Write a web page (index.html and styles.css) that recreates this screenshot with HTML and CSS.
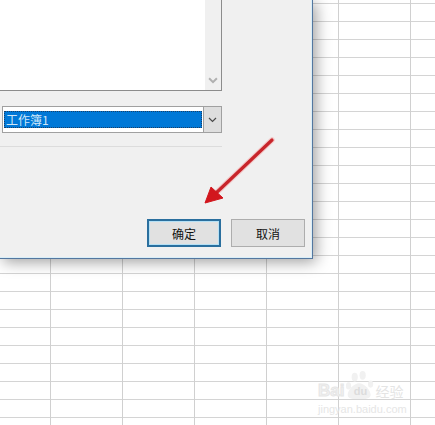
FILE: index.html
```html
<!DOCTYPE html>
<html lang="zh-CN">

<head>
    <meta charset="UTF-8">
    <title>选择工作簿</title>
    <link rel="stylesheet" href="styles.css">
</head>

<body>
    <!-- the sheet cells are the body background -->
    <div class="dialog">
        <div class="list">
            <div class="list-body"></div>
            <div class="scrollbar">
                <svg class="chevron chevron-list" viewBox="0 0 9 6"><path d="M1 1l3.5 3.5L8 1"/></svg>
            </div>
        </div>

        <div class="select">
            <div class="select-field"><span class="select-value">工作簿1</span></div>
            <div class="select-btn">
                <svg class="chevron" viewBox="0 0 9 6"><path d="M1 1l3.5 3.5L8 1"/></svg>
            </div>
        </div>

        <div class="separator"></div>

        <div class="buttons">
            <button class="btn btn-default" type="button">确定</button>
            <button class="btn" type="button">取消</button>
        </div>
    </div>

    <!-- red arrow pointing at the OK button -->
    <svg class="arrow" viewBox="0 0 80 74">
        <path class="arrow-halo" d="M72 4L15 58"/>
        <path class="arrow-line" d="M72 4L15 58"/>
        <path class="arrow-head" d="M5 67L11 51L23 62Z"/>
    </svg>

    <div class="watermark">
        <div class="wm-top">
            <span class="wm-bai">Bai</span>
            <svg class="wm-paw" viewBox="0 0 34 34">
                <ellipse cx="11" cy="8" rx="3.5" ry="5"/>
                <ellipse cx="20" cy="6" rx="3.5" ry="5"/>
                <ellipse cx="4" cy="18" rx="3" ry="4"/>
                <ellipse cx="29" cy="16" rx="3" ry="4"/>
                <path d="M16 15c6 0 13 8 13 13s-6 5-13 5-13 0-13-5 7-13 13-13z"/>
            </svg>
            <span class="wm-du">du</span>
            <span class="wm-cn">经验</span>
        </div>
        <div class="wm-url">jingyan.baidu.com</div>
    </div>
</body>

</html>
```

FILE: styles.css
```css
html,
body {
    height: 100%;
}

body {
    margin: 0;
    overflow: hidden;
    background-color: #fff;
    background-image:
        repeating-linear-gradient(to right, transparent 0, transparent 50px, #d0d0d0 50px, #d0d0d0 51px, transparent 51px, transparent 72px),
        repeating-linear-gradient(to bottom, transparent 0, transparent 3px, #d4d4d4 3px, #d4d4d4 4px, transparent 4px, transparent 18px);
    background-size: 72px 100%, 100% 18px;
    font-family: "Noto Sans CJK SC", "Liberation Sans", sans-serif;
}

.dialog {
    position: absolute;
    left: 0;
    top: 0;
    width: 313px;
    height: 259px;
    box-sizing: border-box;
    display: flex;
    flex-direction: column;
    background: #f0f0f0;
    border-right: 1px solid #54779f;
    border-bottom: 1px solid #54779f;
    box-shadow: inset -1px -1px 0 #d9eef8, 3px 3px 14px rgba(0, 0, 0, 0.38);
}

.list {
    display: flex;
    width: 222px;
    height: 91px;
    box-sizing: border-box;
    flex-shrink: 0;
    background: #fff;
    border-right: 1px solid #8c8c8c;
    border-bottom: 1px solid #8c8c8c;
}

.list-body {
    flex: 1;
}

.scrollbar {
    width: 16px;
    display: flex;
    align-items: flex-end;
    justify-content: center;
    padding-bottom: 6px;
    box-sizing: border-box;
    background: #f0f0f0;
}

.chevron {
    width: 9px;
    height: 6px;
    fill: none;
    stroke: #4a4a4a;
    stroke-width: 1.2;
}

.chevron-list {
    width: 10px;
    height: 7px;
    stroke: #b0b0b0;
    stroke-width: 1.8;
}

.select {
    display: flex;
    width: 220px;
    height: 27px;
    margin: 15px 0 0 2px;
    box-sizing: border-box;
    background: #fff;
    border: 1px solid #a0a0a0;
}

.select-field {
    flex: 1;
    padding: 4px 1px 4px 1px;
}

.select-value {
    display: block;
    height: 17px;
    padding-left: 2px;
    background: #0078d7;
    outline: 1px dotted #1b3f66;
    outline-offset: -1px;
    color: #cfe6f7;
    font-size: 12px;
    line-height: 17px;
}

.select-btn {
    width: 17px;
    display: flex;
    align-items: center;
    justify-content: center;
    background: #dedede;
    border-left: 1px solid #a0a0a0;
}

.separator {
    width: 222px;
    height: 1px;
    margin-top: 13px;
    background: #dcdcdc;
}

.buttons {
    display: flex;
    gap: 10px;
    margin: 72px 0 0 147px;
}

.btn {
    width: 74px;
    height: 28px;
    padding: 0;
    box-sizing: border-box;
    background: #e1e1e1;
    border: 1px solid #adadad;
    color: #111;
    font-family: inherit;
    font-size: 12px;
}

.btn-default {
    border: 2px solid #2a6f9e;
    outline: 1px solid #b5e0f5;
    outline-offset: -3px;
}

.arrow {
    position: absolute;
    left: 200px;
    top: 136px;
    width: 80px;
    height: 74px;
}

.arrow-halo {
    stroke: #f3c9c9;
    stroke-width: 5.5;
    stroke-linecap: round;
    fill: none;
}

.arrow-line {
    stroke: #c8252b;
    stroke-width: 3.2;
    stroke-linecap: round;
    fill: none;
}

.arrow-head {
    fill: #d2161d;
    stroke: #d2161d;
    stroke-width: 1;
}

.watermark {
    position: absolute;
    left: 318px;
    top: 370px;
    color: #f1f1f1;
}

.wm-top {
    display: flex;
    align-items: flex-end;
    height: 30px;
    font-family: "Liberation Sans", sans-serif;
    font-weight: bold;
    line-height: 18px;
}

.wm-bai {
    font-size: 17px;
    -webkit-text-stroke: 1px #e6e6e6;
}

.wm-paw {
    width: 30px;
    height: 30px;
    margin-left: 1px;
    fill: #f1f1f1;
}

.wm-du {
    margin-left: -30px;
    width: 30px;
    text-align: center;
    font-size: 11px;
    color: #dcdcdc;
}

.wm-cn {
    font-family: "Noto Sans CJK SC", sans-serif;
    font-size: 14px;
    font-weight: 400;
    color: #e4e4e4;
}

.wm-url {
    margin-top: 3px;
    font-family: "Liberation Sans", sans-serif;
    font-size: 11px;
    line-height: 12px;
    color: #e6e6e6;
}
```
